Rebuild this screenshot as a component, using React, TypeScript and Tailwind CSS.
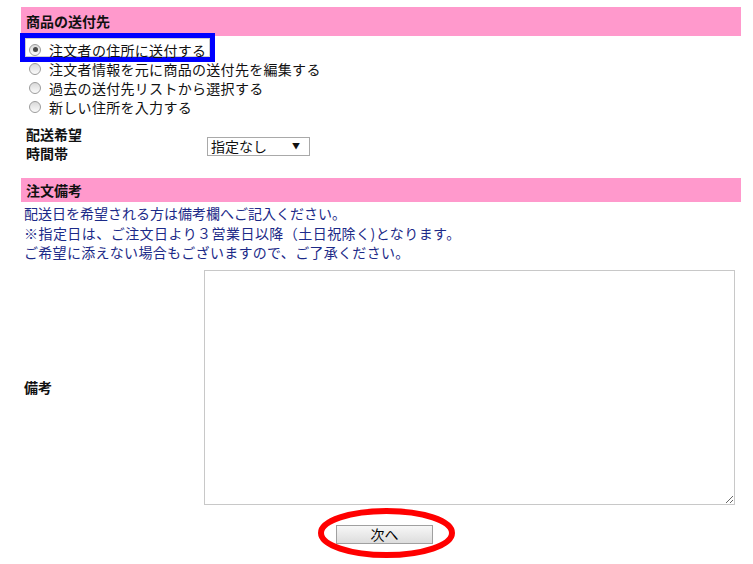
import React from 'react'

// 注文手続き：送付先と備考の入力画面
const addressOptions = [
  '注文者の住所に送付する',
  '注文者情報を元に商品の送付先を編集する',
  '過去の送付先リストから選択する',
  '新しい住所を入力する',
]

function Radio({ checked }: { checked?: boolean }) {
  return (
    <span className="flex h-[12px] w-[12px] shrink-0 items-center justify-center rounded-full border border-[#9c9c9c] bg-gradient-to-b from-[#d9d9d9] to-[#fbfbfb]">
      {checked && <span className="h-[5px] w-[5px] rounded-full bg-[#4a4a4a]" />}
    </span>
  )
}

export default function App() {
  return (
    <div className="h-[564px] w-[753px] overflow-hidden bg-white font-['Noto_Sans_CJK_JP','Noto_Sans',sans-serif] text-[14px] text-[#111]">
      <div className="w-[741px] pl-[21px] pt-[7px]">
        {/* 商品の送付先 */}
        <div className="flex h-[29px] items-center bg-[#ff99cc] px-[5px] font-bold">商品の送付先</div>

        <ul className="pt-[4px]">
          {addressOptions.map((opt, i) => (
            <li key={opt} className="relative flex h-[19px] items-center gap-[8px] pl-[8px] tracking-[0.3px]">
              {i === 0 && (
                <div className="absolute left-[-1px] top-[-7px] h-[29px] w-[195px] border-[5px] border-[#0000ff]">
                  <div className="h-full w-full border border-[#cfcfcf]" />
                </div>
              )}
              <span className="relative">
                <Radio checked={i === 0} />
              </span>
              <span className="relative leading-none">{opt}</span>
            </li>
          ))}
        </ul>

        {/* 配送希望時間帯 */}
        <div className="mt-[9px] flex items-center">
          <div className="w-[186px] pl-[5px] font-bold leading-[19px]">
            <div>配送希望</div>
            <div>時間帯</div>
          </div>
          <div className="mt-[4px] flex h-[19px] w-[103px] items-center justify-between border border-[#a9a9a9] bg-white pl-[3px] pr-[9px] leading-none">
            <span>指定なし</span>
            <span className="text-[8px]">▼</span>
          </div>
        </div>

        {/* 注文備考 */}
        <div className="mt-[15px] flex h-[24px] items-center bg-[#ff99cc] px-[5px] font-bold">注文備考</div>

        <div className="pl-[3px] pt-[2px] leading-[19.5px] text-[#1c2a88]">
          <p>配送日を希望される方は備考欄へご記入ください。</p>
          <p className="tracking-[0.45px]">※指定日は、ご注文日より３営業日以降（土日祝除く)となります。</p>
          <p className="tracking-[0.3px]">ご希望に添えない場合もございますので、ご了承ください。</p>
        </div>

        <div className="mt-[7px] flex items-center">
          <div className="w-[183px] pl-[3px] font-bold">備考</div>
          <textarea className="h-[235px] w-[531px] resize border border-[#c8c8c8] bg-white" />
        </div>

        <div className="mt-[20px] flex pl-[315px]">
          <div className="relative">
            <button className="flex h-[19px] w-[97px] items-center justify-center border border-[#a0a0a0] bg-gradient-to-b from-[#f7f7f7] to-[#dddddd] text-[14px] leading-none text-black">
              次へ
            </button>
            <svg className="pointer-events-none absolute left-[-18px] top-[-17px]" width="137" height="50" viewBox="0 0 137 50" fill="none">
              <ellipse cx="68.5" cy="25" rx="65.5" ry="22" stroke="#ff0000" strokeWidth="6" />
            </svg>
          </div>
        </div>
      </div>
    </div>
  )
}
